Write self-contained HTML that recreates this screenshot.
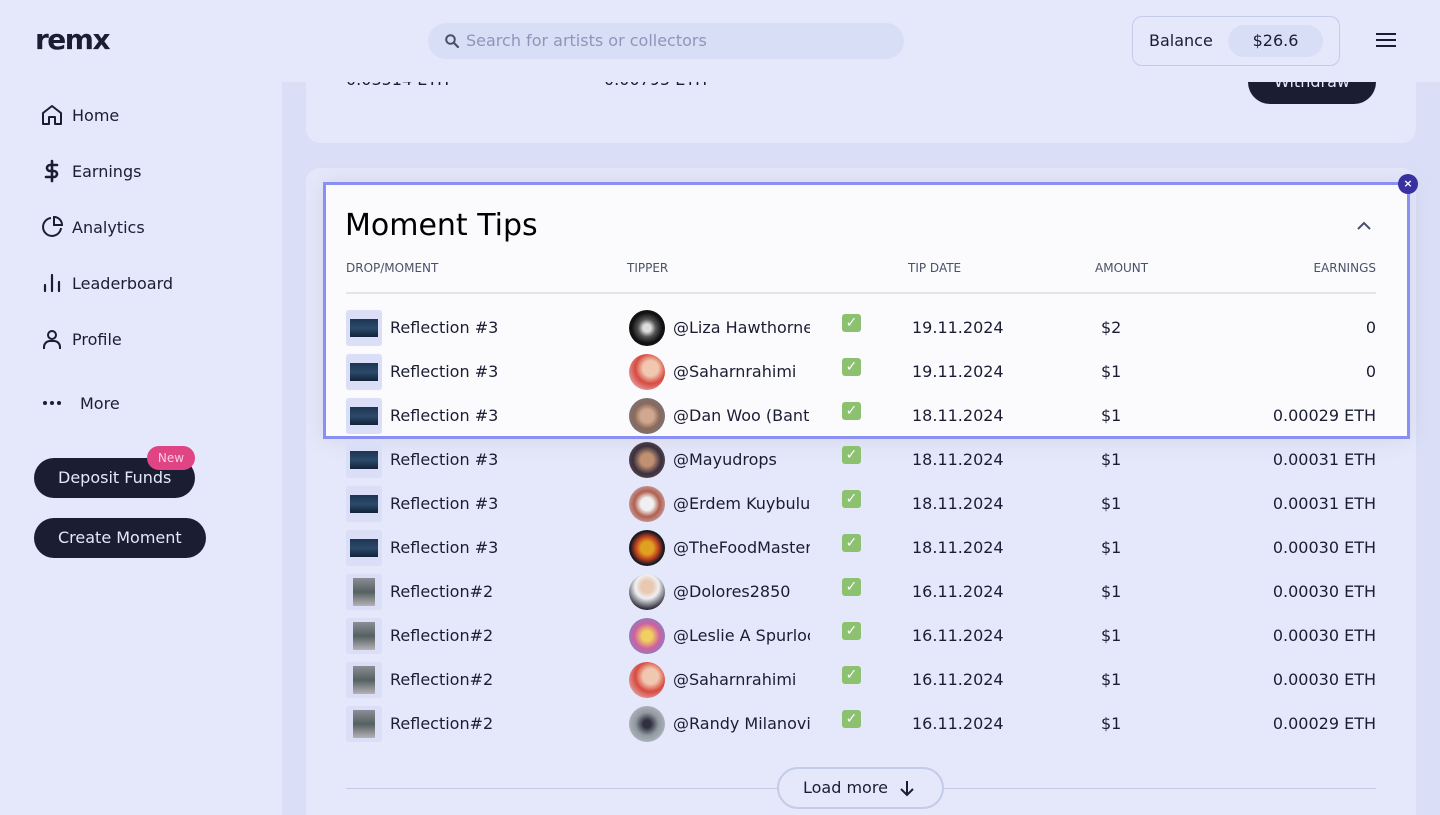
<!DOCTYPE html>
<html style="overflow:hidden;width:1440px;height:815px"><head><meta charset="utf-8"><style>
*{box-sizing:border-box;margin:0;padding:0}
body{width:1440px;height:815px;overflow:hidden;background:#e5e7fb;font-family:"DejaVu Sans","Liberation Sans",sans-serif;color:#1b1d33;position:relative}
.a{position:absolute;white-space:nowrap}
.main{position:absolute;left:282px;top:82px;width:1158px;height:733px;background:#dadef7}
.card{position:absolute;left:306px;width:1110px;background:#e5e7fb;border-radius:14px}
.nav{position:absolute;left:40px;font-size:16px;display:flex;align-items:center}
.nav svg{width:24px;height:24px;margin-right:8px}
.btn{position:absolute;left:34px;height:40px;background:#1b1d33;color:#e5e7fb;border-radius:20px;font-size:16px;line-height:40px;padding:0 24px}
.hdr{font-size:12px;color:#4a5068;top:261px}
.row{position:absolute;left:0;width:1440px;height:44px;font-size:16px}
.th{position:absolute;left:346px;top:5px;width:36px;height:36px;background:#dadef7;border-radius:3px}
.th i{position:absolute;left:4px;top:9px;width:28px;height:18px;background:linear-gradient(#1d3552,#2b4a6a 50%,#122338)}
.th.b i{left:7px;top:4px;width:22px;height:28px;background:linear-gradient(#8c8e96,#556060 50%,#b5b1b8)}
.av{position:absolute;left:629px;top:5px;width:36px;height:36px;border-radius:50%}
.nm{position:absolute;left:673px;top:13px;width:137px;overflow:hidden;white-space:nowrap}
.ck{position:absolute;left:842px;top:9px;width:19px;height:18px;background:#8cc26f;border-radius:3px;color:#fff;font-size:14px;line-height:18px;text-align:center;font-weight:bold}
.dt{position:absolute;left:912px;top:13px}
.am{position:absolute;left:1101px;top:13px}
.er{position:absolute;right:64px;top:13px}
.dm{position:absolute;left:390px;top:13px}
</style></head><body>
<div class="main"></div>
<div class="card" style="top:40px;height:103px;border-radius:0 0 14px 14px"></div>
<div class="a" style="left:346px;top:70px;font-size:16px">0.03514 ETH</div>
<div class="a" style="left:604px;top:70px;font-size:16px">0.00795 ETH</div>
<div class="a" style="left:1248px;top:60px;width:128px;height:44px;border-radius:22px;background:#1b1d33;color:#e5e7fb;font-size:16px;text-align:center;line-height:44px">Withdraw</div>
<!-- header -->
<div class="a" style="left:0;top:0;width:1440px;height:82px;background:#e5e7fb"></div>
<div class="a" style="left:35px;top:23px;font-size:28px;line-height:34px;font-weight:900;letter-spacing:-1.5px;font-family:'DejaVu Sans',sans-serif;color:#1b1d33">remx</div>
<div class="a" style="left:428px;top:23px;width:476px;height:36px;background:#d9def7;border-radius:18px"></div>
<svg class="a" style="left:444px;top:33px" width="16" height="16" viewBox="0 0 16 16"><circle cx="6.5" cy="6.5" r="4.3" fill="none" stroke="#4a5068" stroke-width="2"/><path d="M9.7 9.7L14 14" stroke="#4a5068" stroke-width="2.2" stroke-linecap="round"/></svg>
<div class="a" style="left:466px;top:31px;font-size:16px;color:#8f95b8">Search for artists or collectors</div>
<div class="a" style="left:1132px;top:16px;width:208px;height:50px;border:1px solid #c3cbe9;border-radius:10px"></div>
<div class="a" style="left:1149px;top:31px;font-size:16px">Balance</div>
<div class="a" style="left:1228px;top:25px;width:95px;height:32px;background:#d9def7;border-radius:16px;font-size:16px;text-align:center;line-height:32px">$26.6</div>
<div class="a" style="left:1376px;top:33px;width:20px;height:2px;background:#1b1d33;box-shadow:0 6px 0 #1b1d33,0 12px 0 #1b1d33"></div>
<!-- sidebar -->
<div class="nav" style="top:103px"><svg viewBox="0 0 24 24" fill="none" stroke="#1b1d33" stroke-width="2" stroke-linejoin="round"><path d="M3 10L12 3l9 7v11H15v-7H9v7H3z"/></svg>Home</div>
<div class="nav" style="top:159px"><svg viewBox="0 0 24 24" fill="none" stroke="#1b1d33" stroke-width="2.6" stroke-linecap="round"><path d="M12 2v20M17 6H10a3 3 0 000 6h4a3 3 0 010 6H6"/></svg>Earnings</div>
<div class="nav" style="top:215px"><svg viewBox="0 0 24 24" fill="none" stroke="#1b1d33" stroke-width="2"><path d="M21 13A9 9 0 1111 3"/><path d="M14 2a8 8 0 018 8h-8z"/></svg>Analytics</div>
<div class="nav" style="top:271px"><svg viewBox="0 0 24 24" fill="none" stroke="#1b1d33" stroke-width="2.2" stroke-linecap="round"><path d="M5 20v-6M12 20V4M19 20v-9"/></svg>Leaderboard</div>
<div class="nav" style="top:327px"><svg viewBox="0 0 24 24" fill="none" stroke="#1b1d33" stroke-width="2"><circle cx="12" cy="8" r="4"/><path d="M4 22v-2a6 6 0 016-6h4a6 6 0 016 6v2"/></svg>Profile</div>
<div class="nav" style="top:391px"><svg viewBox="0 0 24 24" fill="#1b1d33" style="margin-right:16px"><circle cx="5" cy="12" r="2"/><circle cx="12" cy="12" r="2"/><circle cx="19" cy="12" r="2"/></svg>More</div>
<div class="btn" style="top:458px">Deposit Funds</div>
<div class="a" style="left:147px;top:446px;width:48px;height:24px;border-radius:12px;background:#e04485;color:#f5d0e0;font-size:12px;text-align:center;line-height:24px">New</div>
<div class="btn" style="top:518px">Create Moment</div>
<!-- tips card -->
<div class="card" style="top:168px;height:647px;border-radius:14px 14px 0 0"></div>
<div class="a" style="left:323px;top:182px;width:1087px;height:257px;border:3px solid #8a8ff3;background:#fbfbfd;box-shadow:0 0 24px rgba(0,0,0,.08)"></div>
<div class="a" style="left:1398px;top:174px;width:20px;height:20px;border-radius:50%;background:#3a31a0;color:#fff;font-size:11px;text-align:center;line-height:20px;font-weight:bold">×</div>
<div class="a" style="left:345px;top:208px;font-size:30px;color:#000">Moment Tips</div>
<svg class="a" style="left:1355px;top:219px" width="18" height="14" viewBox="0 0 18 14"><path d="M3 10l6-6 6 6" fill="none" stroke="#4a5068" stroke-width="2"/></svg>
<div class="a hdr" style="left:346px">DROP/MOMENT</div>
<div class="a hdr" style="left:627px">TIPPER</div>
<div class="a hdr" style="left:908px">TIP DATE</div>
<div class="a hdr" style="left:1095px">AMOUNT</div>
<div class="a hdr" style="right:64px">EARNINGS</div>
<div class="a" style="left:346px;top:292px;width:1030px;height:2px;background:#e3e4ea"></div>

<div class="row" style="top:305px"><div class="th"><i></i></div><div class="dm">Reflection #3</div><div class="av" style="background:radial-gradient(#ddd 15%,#555 35%,#111 60%)"></div><div class="nm">@Liza Hawthorne</div><div class="ck">✓</div><div class="dt">19.11.2024</div><div class="am">$2</div><div class="er">0</div></div>
<div class="row" style="top:349px"><div class="th"><i></i></div><div class="dm">Reflection #3</div><div class="av" style="background:radial-gradient(circle at 60% 40%,#f0c8b0 25%,#d84a40 50%,#e6e0ea)"></div><div class="nm">@Saharnrahimi</div><div class="ck">✓</div><div class="dt">19.11.2024</div><div class="am">$1</div><div class="er">0</div></div>
<div class="row" style="top:393px"><div class="th"><i></i></div><div class="dm">Reflection #3</div><div class="av" style="background:radial-gradient(#d0a890 25%,#8a6a5a 50%,#6a7a9a)"></div><div class="nm">@Dan Woo (Bantam)</div><div class="ck">✓</div><div class="dt">18.11.2024</div><div class="am">$1</div><div class="er">0.00029 ETH</div></div>
<div class="row" style="top:437px"><div class="th"><i></i></div><div class="dm">Reflection #3</div><div class="av" style="background:radial-gradient(#c09070 25%,#3a3040 55%,#7a5a50)"></div><div class="nm">@Mayudrops</div><div class="ck">✓</div><div class="dt">18.11.2024</div><div class="am">$1</div><div class="er">0.00031 ETH</div></div>
<div class="row" style="top:481px"><div class="th"><i></i></div><div class="dm">Reflection #3</div><div class="av" style="background:radial-gradient(#f0f0f0 25%,#b06050 50%,#d8d8e0)"></div><div class="nm">@Erdem Kuybulu</div><div class="ck">✓</div><div class="dt">18.11.2024</div><div class="am">$1</div><div class="er">0.00031 ETH</div></div>
<div class="row" style="top:525px"><div class="th"><i></i></div><div class="dm">Reflection #3</div><div class="av" style="background:radial-gradient(#e0a020 25%,#c04020 45%,#1a1a20 65%)"></div><div class="nm">@TheFoodMaster</div><div class="ck">✓</div><div class="dt">18.11.2024</div><div class="am">$1</div><div class="er">0.00030 ETH</div></div>
<div class="row" style="top:569px"><div class="th b"><i></i></div><div class="dm">Reflection#2</div><div class="av" style="background:radial-gradient(circle at 50% 35%,#e8c8b0 20%,#f0f0f4 40%,#1a1a28 80%)"></div><div class="nm">@Dolores2850</div><div class="ck">✓</div><div class="dt">16.11.2024</div><div class="am">$1</div><div class="er">0.00030 ETH</div></div>
<div class="row" style="top:613px"><div class="th b"><i></i></div><div class="dm">Reflection#2</div><div class="av" style="background:radial-gradient(#f0d060 20%,#d060a0 50%,#40a0e0)"></div><div class="nm">@Leslie A Spurlock</div><div class="ck">✓</div><div class="dt">16.11.2024</div><div class="am">$1</div><div class="er">0.00030 ETH</div></div>
<div class="row" style="top:657px"><div class="th b"><i></i></div><div class="dm">Reflection#2</div><div class="av" style="background:radial-gradient(circle at 60% 40%,#f0c8b0 25%,#d84a40 50%,#e6e0ea)"></div><div class="nm">@Saharnrahimi</div><div class="ck">✓</div><div class="dt">16.11.2024</div><div class="am">$1</div><div class="er">0.00030 ETH</div></div>
<div class="row" style="top:701px"><div class="th b"><i></i></div><div class="dm">Reflection#2</div><div class="av" style="background:radial-gradient(#303040 15%,#9098a0 45%,#c8ccd4)"></div><div class="nm">@Randy Milanovic</div><div class="ck">✓</div><div class="dt">16.11.2024</div><div class="am">$1</div><div class="er">0.00029 ETH</div></div>

<div class="a" style="left:346px;top:788px;width:1030px;height:1px;background:#c3cbe9"></div>
<div class="a" style="left:777px;top:767px;width:167px;height:42px;border:2px solid #c3cbe9;border-radius:21px;background:#e5e7fb;font-size:16px;line-height:38px;padding-left:24px">Load more</div>
<svg class="a" style="left:897px;top:778px" width="20" height="20" viewBox="0 0 20 20"><path d="M10 3v14M4 11l6 6 6-6" fill="none" stroke="#1b1d33" stroke-width="2"/></svg>
</body></html>
